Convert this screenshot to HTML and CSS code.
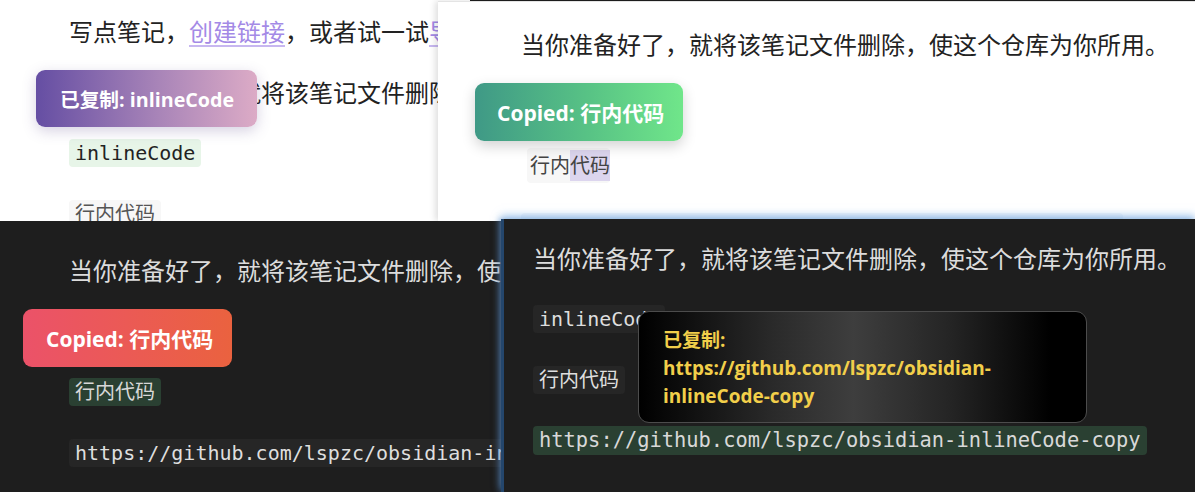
FILE: index.html
```html
<!DOCTYPE html>
<html lang="zh-CN">
<head>
<meta charset="utf-8">
<title>inlineCode copy</title>
<link rel="stylesheet" href="styles.css">
</head>
<body>
<div class="canvas">
  <section class="shot shot-a light">
    <div class="doc">
      <p class="row">写点笔记，<span class="link">创建链接</span>，或者试一试<span class="link">导入工具</span>。</p>
      <p class="row">当你准备好了，就将该笔记文件删除，使这个仓库为你所用。</p>
      <p class="row"><code class="code code-green">inlineCode</code></p>
      <p class="row"><code class="code code-gray">行内代码</code></p>
    </div>
    <div class="toast toast-violet">已复制: inlineCode</div>
  </section>

  <section class="shot shot-b light">
    <div class="doc">
      <p class="row">当你准备好了，就将该笔记文件删除，使这个仓库为你所用。</p>
      <p class="row"><code class="code code-gray">inlineCode</code></p>
      <p class="row"><code class="code code-plain">行内<span class="sel">代码</span></code></p>
      <p class="row"><code class="code code-faint">https://github.com/lspzc/obsidian-inlineCode-copy</code></p>
    </div>
    <div class="toast toast-green">Copied: 行内代码</div>
  </section>

  <section class="shot shot-c dark">
    <div class="doc">
      <p class="row">当你准备好了，就将该笔记文件删除，使这个仓库为你所用。</p>
      <p class="row"><code class="code code-dgray">inlineCode</code></p>
      <p class="row"><code class="code code-dgreen">行内代码</code></p>
      <p class="row"><code class="code code-dgray">https://github.com/lspzc/obsidian-inlineCode-copy</code></p>
    </div>
    <div class="toast toast-red">Copied: 行内代码</div>
  </section>

  <section class="shot shot-d dark">
    <div class="doc">
      <p class="row">当你准备好了，就将该笔记文件删除，使这个仓库为你所用。</p>
      <p class="row"><code class="code code-dgray">inlineCode</code></p>
      <p class="row"><code class="code code-dgray">行内代码</code></p>
      <p class="row"><code class="code code-dgreen code-wide">https://github.com/lspzc/obsidian-inlineCode-copy</code></p>
    </div>
    <div class="toast toast-black">已复制:<br>https://github.com/lspzc/obsidian-<br>inlineCode-copy</div>
  </section>
</div>
</body>
</html>
```

FILE: styles.css
```css
* { box-sizing: border-box; }

html, body {
  margin: 0;
  padding: 0;
  background: #1e1e1e;
}

.canvas {
  position: relative;
  width: 1195px;
  height: 492px;
  overflow: hidden;
}

.shot {
  position: absolute;
  overflow: hidden;
  font-family: "Noto Sans CJK SC", "Noto Sans", sans-serif;
  font-size: 24px;
}

.light { background: #ffffff; color: #222222; }
.dark { background: #1e1e1e; color: #dcdcdc; }

.doc {
  display: flex;
  flex-direction: column;
}

.row {
  margin: 0;
  height: 61px;
  display: flex;
  align-items: center;
  white-space: nowrap;
  line-height: 1;
}

.link {
  color: #a48ae6;
  text-decoration: underline;
  text-decoration-color: #c7b7f0;
  text-underline-offset: 4px;
}

.code {
  font-family: "DejaVu Sans Mono", "Noto Sans CJK SC", monospace;
  font-size: 20px;
  line-height: 28px;
  padding: 0 6px;
  border-radius: 4px;
}

.code-wide { font-size: 20.4px; line-height: 29px; }

.code-green { background: #e7f5e8; color: #222; }
.code-gray { background: #f5f5f5; color: #333; }
.code-faint { background: #f3f6fa; color: #8a9aae; }
.code-plain { background: #f7f7f7; color: #444; padding: 4px 0 3px 3px; }
.sel { background: #dcd5ee; padding: 4px 0 3px; }
.code-dgray { background: #262626; color: #dedede; }
.code-dgreen { background: #2a4032; color: #d8d8d8; }

/* panel A */
.shot-a { left: 0; top: 0; width: 470px; height: 222px; }
.shot-a .doc { padding-left: 69px; }
.shot-a .code-gray { color: #555; background: #f7f7f7; }

/* panel B */
.shot-b {
  left: 438px; top: 1px; width: 757px; height: 220px;
  box-shadow: -3px 0 6px rgba(0, 0, 0, 0.12);
  border-top: 1px solid #e4e4e4;
}
.shot-b .doc { padding: 11px 0 0 83px; }
.shot-b .row:nth-child(3) .code { margin-left: 6px; }

/* panel C */
.shot-c { left: 0; top: 221px; width: 503px; height: 271px; }
.shot-c .doc { padding: 18px 0 0 69px; }

/* panel D */
.shot-d {
  left: 501px; top: 219px; width: 694px; height: 273px;
  border-left: 3px solid #24466c;
  box-shadow: 0 -4px 8px rgba(120, 175, 235, 0.55), -2px 0 6px rgba(60, 110, 170, 0.5);
}
.shot-d .doc { padding: 8px 0 0 29px; }

/* toasts */
.toast {
  position: absolute;
  display: flex;
  align-items: center;
  font-family: "Open Sans", "Noto Sans CJK SC", sans-serif;
  font-weight: 700;
  font-size: 21px;
  color: #ffffff;
  border-radius: 9px;
  padding: 0 24px;
  white-space: nowrap;
}

.toast-violet {
  left: 36px; top: 70px; width: 221px; height: 57px;
  font-size: 19.7px;
  background: linear-gradient(90deg, #654ea3 0%, #a884b8 55%, #dcabc6 100%);
  box-shadow: 0 4px 14px rgba(90, 70, 140, 0.25);
}

.toast-green {
  left: 37px; top: 81px; width: 208px; height: 58px;
  background: linear-gradient(90deg, #3f9986 0%, #58c385 55%, #70e68a 100%);
  box-shadow: 0 5px 14px rgba(0, 0, 0, 0.18);
  padding-left: 22px;
}

.toast-red {
  left: 23px; top: 88px; width: 209px; height: 58px;
  background: linear-gradient(90deg, #eb5269 0%, #eb5a55 50%, #ea623f 100%);
  padding-left: 23px;
}

.toast-black {
  left: 134px; top: 92px; width: 449px; height: 112px;
  align-items: flex-start;
  padding: 14px 24px 0;
  font-size: 19px;
  line-height: 28px;
  color: #f2cf4a;
  border: 1px solid #4c4c4c;
  border-radius: 11px;
  background: linear-gradient(90deg, #000000 0%, #2a2a2a 30%, #3e3e3e 48%, #242424 70%, #000000 92%);
}
```
